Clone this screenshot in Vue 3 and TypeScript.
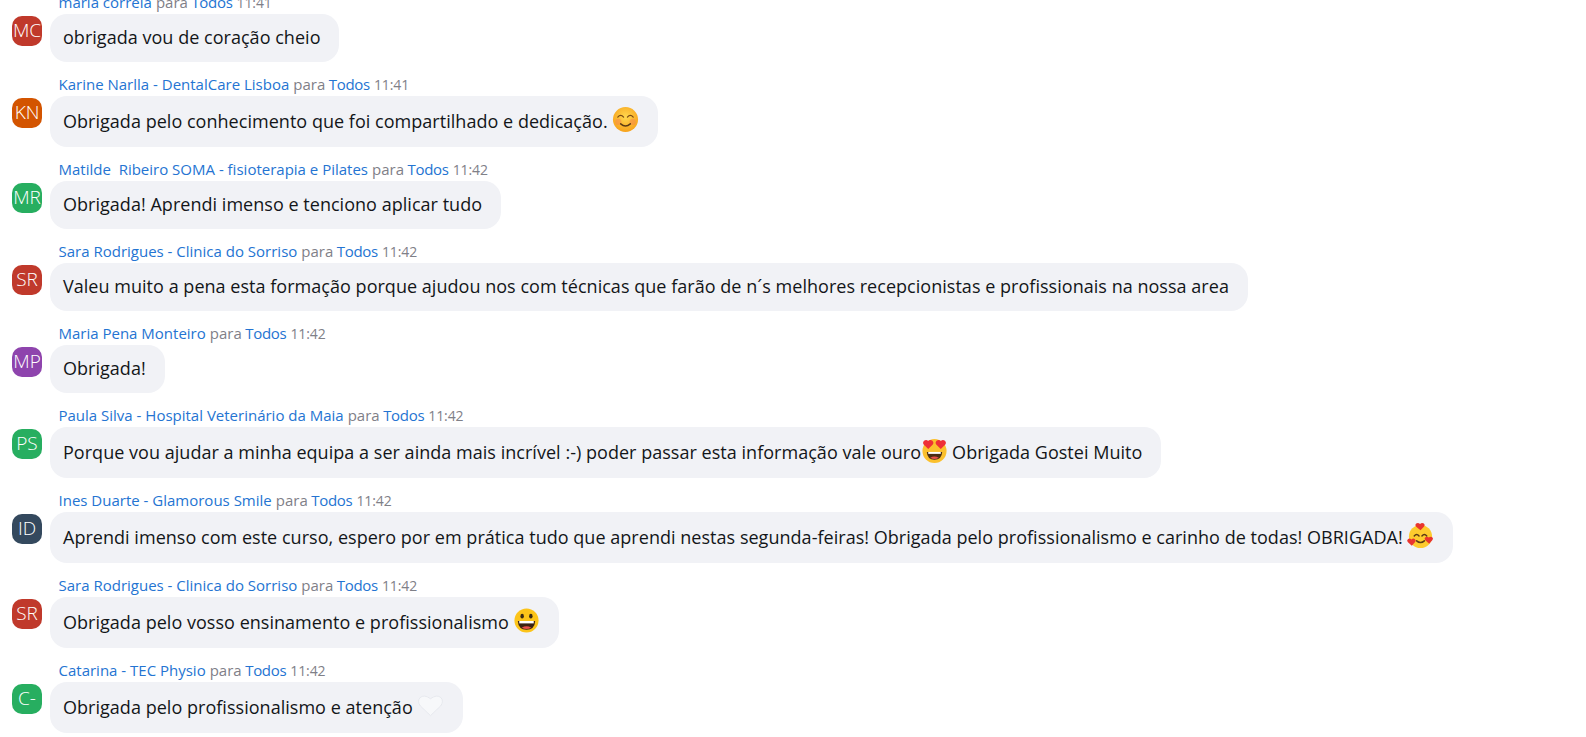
<template>
  <div class="chat">
    <div v-for="(m, i) in messages" :key="i" class="msg">
      <div class="head">
        <span class="sender">{{ m.name }}</span>
        <span class="para">para</span>
        <span class="sender todos">Todos</span>
        <span class="time">{{ m.time }}</span>
      </div>
      <div class="avatar" :class="m.color">{{ m.initials }}</div>
      <div class="bubble">
        <span>{{ m.text }}</span>
        <svg v-if="m.emoji === 'smile'" class="emoji" viewBox="0 0 28 28">
          <defs>
            <radialGradient id="f1" cx="50%" cy="40%" r="60%">
              <stop offset="0" stop-color="#ffd84f" />
              <stop offset="1" stop-color="#f7a21b" />
            </radialGradient>
          </defs>
          <circle cx="14" cy="14" r="13" fill="url(#f1)" />
          <circle cx="6.5" cy="16.5" r="3.2" fill="#f58a4b" opacity="0.55" />
          <circle cx="21.5" cy="16.5" r="3.2" fill="#f58a4b" opacity="0.55" />
          <path d="M6 11.500q3-3.400 6 0M16 11.500q3-3.400 6 0" fill="none" stroke="#7a4a14" stroke-width="1.300" stroke-linecap="round" />
          <path d="M9 18.500q5 4.500 10 0" fill="none" stroke="#5b3a14" stroke-width="1.500" stroke-linecap="round" />
        </svg>
        <svg v-else-if="m.emoji === 'eyes'" class="emoji e-eyes" viewBox="0 0 28 28">
          <circle cx="14" cy="14.5" r="12.5" fill="#fbc02d" />
          <path d="M6 15.5h16q-.5 8-8 8t-8-8z" fill="#4a2d14" />
          <path d="M7.5 15.5h13v2h-13z" fill="#fff" />
          <path d="M9.5 21.5q4.500-2.500 9 0q-4.500 2.500-9 0z" fill="#e8504a" />
          <path d="M7.500 12.500 3 8q-1.800-2.200.2-4.200 2.300-1.800 4.300.4 2-2.200 4.300-.4 2 2 .2 4.200z" fill="#ee2f36" />
          <path d="M20.500 12.500 16 8q-1.800-2.200.2-4.200 2.300-1.800 4.300.4 2-2.200 4.300-.4 2 2 .2 4.200z" fill="#ee2f36" />
        </svg>
        <svg v-else-if="m.emoji === 'hearts'" class="emoji" viewBox="0 0 28 28">
          <circle cx="14" cy="15" r="12" fill="#fdcb2e" />
          <path d="M7.500 14.500q2.500-3.200 5 0M15.500 14.500q2.500-3.200 5 0" fill="none" stroke="#5b3a14" stroke-width="1.500" stroke-linecap="round" />
          <path d="M10 19.500q4 3.500 8 0" fill="none" stroke="#5b3a14" stroke-width="1.600" stroke-linecap="round" />
          <path d="M14 8.500 9.500 5q-1.800-1.800 0-3.400 2-1.400 4 .4 2-1.800 4-.4 1.800 1.600 0 3.400z" fill="#e8352e" />
          <path d="M5 24.500 1 21q-1.600-1.800 0-3.200 1.800-1.300 3.600.4 1.800-1.700 3.600-.4 1.600 1.400 0 3.200z" fill="#e8352e" />
          <path d="M23 22.500 19 19q-1.600-1.800 0-3.200 1.800-1.300 3.600.4 1.800-1.700 3.600-.4 1.600 1.400 0 3.200z" fill="#e8352e" />
        </svg>
        <svg v-else-if="m.emoji === 'grin'" class="emoji" viewBox="0 0 28 28">
          <circle cx="14" cy="14" r="12.500" fill="#fcc419" />
          <ellipse cx="9.500" cy="9.500" rx="1.800" ry="2.500" fill="#3b2a14" />
          <ellipse cx="18.500" cy="9.500" rx="1.800" ry="2.500" fill="#3b2a14" />
          <path d="M5 14.500h18q-.5 9-9 9t-9-9z" fill="#3b2212" />
          <path d="M6.500 14.500h15v2.500h-15z" fill="#fff" />
          <path d="M9 21.500q5-3 10 0q-5 2.500-10 0z" fill="#e8504a" />
        </svg>
        <svg v-else-if="m.emoji === 'heart'" class="emoji" viewBox="0 0 28 28">
          <path d="M14 24.500 3.500 14.500q-3.500-4.500-.5-8.500 4.500-4 11 1 6.500-5 11-1 3 4-.5 8.500z" fill="#f7f8fa" stroke="#e6e8ed" stroke-width="1" />
        </svg>
        <span v-if="m.after" class="after">{{ m.after }}</span>
      </div>
    </div>
  </div>
</template>

<script setup lang="ts">
interface Message {
  name: string;
  time: string;
  initials: string;
  color: string;
  text: string;
  emoji?: string;
  after?: string;
}

const messages: Message[] = [
  { name: "maria correia", time: "11:41", initials: "MC", color: "red", text: "obrigada vou de coração cheio" },
  { name: "Karine Narlla - DentalCare Lisboa", time: "11:41", initials: "KN", color: "orange", text: "Obrigada pelo conhecimento que foi compartilhado e dedicação.", emoji: "smile" },
  { name: "Matilde  Ribeiro SOMA - fisioterapia e Pilates", time: "11:42", initials: "MR", color: "green", text: "Obrigada! Aprendi imenso e tenciono aplicar tudo" },
  { name: "Sara Rodrigues - Clinica do Sorriso", time: "11:42", initials: "SR", color: "red", text: "Valeu muito a pena esta formação porque ajudou nos com técnicas que farão de n´s melhores recepcionistas e profissionais na nossa area" },
  { name: "Maria Pena Monteiro", time: "11:42", initials: "MP", color: "purple", text: "Obrigada!" },
  { name: "Paula Silva - Hospital Veterinário da Maia", time: "11:42", initials: "PS", color: "green", text: "Porque vou ajudar a minha equipa a ser ainda mais incrível :-) poder passar esta informação vale ouro", emoji: "eyes", after: "Obrigada Gostei Muito" },
  { name: "Ines Duarte - Glamorous Smile", time: "11:42", initials: "ID", color: "navy", text: "Aprendi imenso com este curso, espero por em prática tudo que aprendi nestas segunda-feiras! Obrigada pelo profissionalismo e carinho de todas! OBRIGADA!", emoji: "hearts" },
  { name: "Sara Rodrigues - Clinica do Sorriso", time: "11:42", initials: "SR", color: "red", text: "Obrigada pelo vosso ensinamento e profissionalismo", emoji: "grin" },
  { name: "Catarina - TEC Physio", time: "11:42", initials: "C-", color: "green", text: "Obrigada pelo profissionalismo e atenção", emoji: "heart" }
];
</script>

<style scoped>
.chat {
  height: 737px;
  overflow: hidden;
  padding-top: 1px;
  box-sizing: border-box;
  font-family: "Open Sans", "Noto Sans", sans-serif;
  color: #131619;
}

.msg {
  display: grid;
  grid-template-columns: 50px 1fr;
  grid-template-rows: 21px auto;
  margin-bottom: 13px;
}

.msg:first-child {
  margin-top: -8px;
}

.head {
  grid-column: 2;
  padding-left: 8.500px;
  font-size: 15px;
  line-height: 19px;
  white-space: pre;
}

.sender {
  color: #2474d2;
}

.para,
.time {
  color: #7f8088;
  margin-left: 4px;
}

.todos {
  margin-left: 3.500px;
  letter-spacing: -0.3px;
}

.time {
  font-size: 14px;
  letter-spacing: -0.1px;
}

.avatar {
  width: 30px;
  height: 30px;
  margin: 2px 0 0 12px;
  border-radius: 10px;
  overflow: hidden;
  color: #fff;
  font-size: 19px;
  font-weight: 300;
  line-height: 29px;
  text-align: center;
  white-space: nowrap;
}

.red { background: #c0392b; }
.orange { background: #d35400; }
.green { background: #27ae60; }
.purple { background: #8e44ad; }
.navy { background: #34495e; }

.bubble {
  display: flex;
  align-items: center;
  width: fit-content;
  min-height: 48px;
  padding: 0 19px 2px 13px;
  box-sizing: border-box;
  border-radius: 17px;
  background: #f1f2f6;
  font-size: 18px;
  line-height: 24px;
  letter-spacing: 0.03px;
  white-space: pre;
}

.after {
  margin-left: 4px;
}

.emoji {
  width: 27px;
  height: 27px;
  margin: 10px 0 12px 4px;
  flex: none;
}

.e-eyes {
  margin-left: 0;
}
</style>

<style>
html,
body {
  background: #fff;
  overflow: hidden;
}
</style>
